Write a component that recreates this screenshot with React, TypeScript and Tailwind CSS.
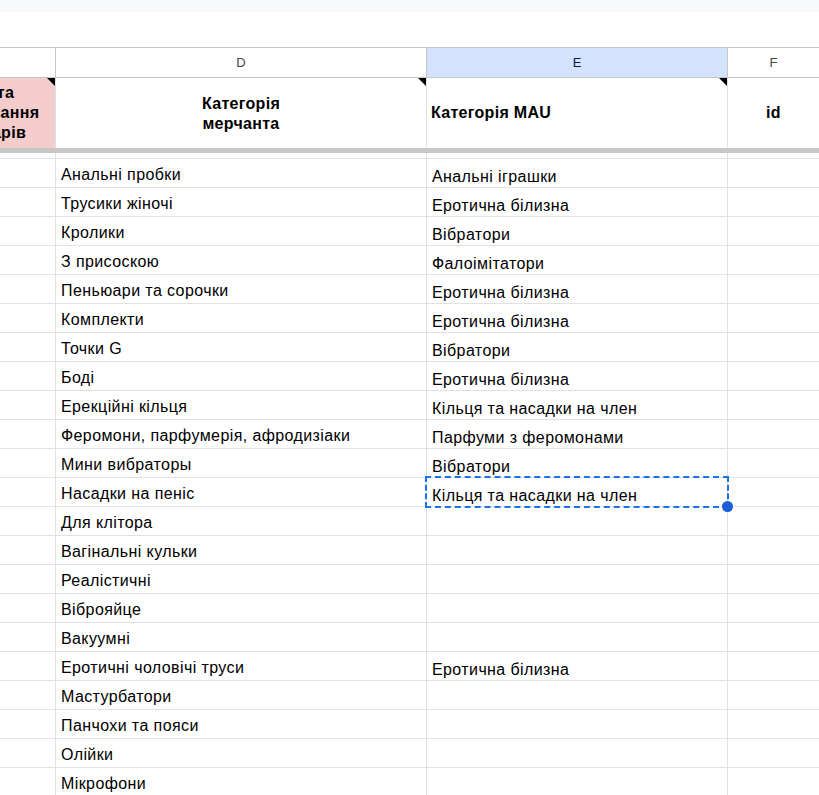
import React from "react";

const rows: [string, string][] = [
  ["Анальні пробки", "Анальні іграшки"],
  ["Трусики жіночі", "Еротична білизна"],
  ["Кролики", "Вібратори"],
  ["З присоскою", "Фалоімітатори"],
  ["Пеньюари та сорочки", "Еротична білизна"],
  ["Комплекти", "Еротична білизна"],
  ["Точки G", "Вібратори"],
  ["Боді", "Еротична білизна"],
  ["Ерекційні кільця", "Кільця та насадки на член"],
  ["Феромони, парфумерія, афродизіаки", "Парфуми з феромонами"],
  ["Мини вибраторы", "Вібратори"],
  ["Насадки на пеніс", "Кільця та насадки на член"],
  ["Для клітора", ""],
  ["Вагінальні кульки", ""],
  ["Реалістичні", ""],
  ["Віброяйце", ""],
  ["Вакуумні", ""],
  ["Еротичні чоловічі труси", "Еротична білизна"],
  ["Мастурбатори", ""],
  ["Панчохи та пояси", ""],
  ["Олійки", ""],
  ["Мікрофони", ""],
];

const grid = "grid grid-cols-[56px_371px_301px_1fr]";

function Tri() {
  return (
    <div className="absolute right-0 top-0 w-0 h-0 border-t-[8px] border-t-black border-l-[8px] border-l-transparent" />
  );
}

export default function App() {
  return (
    <div
      className="w-[819px] h-[795px] overflow-hidden bg-white text-[#000]"
      style={{ fontFamily: '"Liberation Sans", Arial, sans-serif' }}
    >
      <div className="h-[12px] bg-[#f8f9fb]" />
      <div className="h-[35px] bg-white" />
      {/* column letters */}
      <div className={`${grid} h-[31px] border-t border-b border-[#c4c7c5] text-[13px] text-[#444746]`}>
        <div className="border-r border-[#c4c7c5]" />
        <div className="border-r border-[#c4c7c5] flex items-center justify-center">D</div>
        <div className="border-r border-[#c4c7c5] bg-[#d3e3fd] text-[#041e49] flex items-center justify-center">E</div>
        <div className="flex items-center justify-center">F</div>
      </div>
      {/* header row */}
      <div className={`${grid} h-[70px] text-[16px] font-bold leading-[20px] tracking-[0.3px]`}>
        <div className="relative bg-[#f4cccc] border-r border-[#e1e1e1] overflow-hidden">
          <div className="absolute right-[-2px] top-0 h-full w-[124px] flex items-center justify-center text-center">
            <div>Дата<br />додавання<br />товарів</div>
          </div>
          <Tri />
        </div>
        <div className="relative border-r border-[#e1e1e1] flex items-center justify-center text-center">
          <div className="pt-[1px]">Категорія<br />мерчанта</div>
          <Tri />
        </div>
        <div className="relative border-r border-[#e1e1e1] flex items-center px-[4px]">
          <span>Категорія MAU</span>
          <Tri />
        </div>
        <div className="flex items-center justify-center">id</div>
      </div>
      {/* freeze bar */}
      <div className="h-[5px] bg-[#c7c7c7]" />
      {/* partial row */}
      <div className={`${grid} h-[6px] border-b border-[#e1e1e1]`}>
        <div className="border-r border-[#e1e1e1]" />
        <div className="border-r border-[#e1e1e1]" />
        <div className="border-r border-[#e1e1e1]" />
        <div />
      </div>
      {rows.map(([d, e], i) => {
        const sel = i === 11;
        return (
          <div key={i} className={`${grid} h-[29px] border-b border-[#e1e1e1] text-[16px] leading-[18px] tracking-[0.4px]`}>
            <div className="border-r border-[#e1e1e1]" />
            <div className="border-r border-[#e1e1e1] flex items-end px-[5px] pb-[3px] whitespace-nowrap">
              {d}
            </div>
            <div className="relative border-r border-[#e1e1e1] flex items-end px-[5px] pb-[1px] whitespace-nowrap">
              {e}
              {sel && (
                <>
                  <div className="absolute left-[-2px] top-[-2px] right-[-2px] bottom-[-2px] border-2 border-dashed border-[#1a73e8] z-10" />
                  <div className="absolute right-[-6px] bottom-[-6px] w-[11px] h-[11px] rounded-full bg-[#1a5fd8] z-20" />
                </>
              )}
            </div>
            <div />
          </div>
        );
      })}
    </div>
  );
}
